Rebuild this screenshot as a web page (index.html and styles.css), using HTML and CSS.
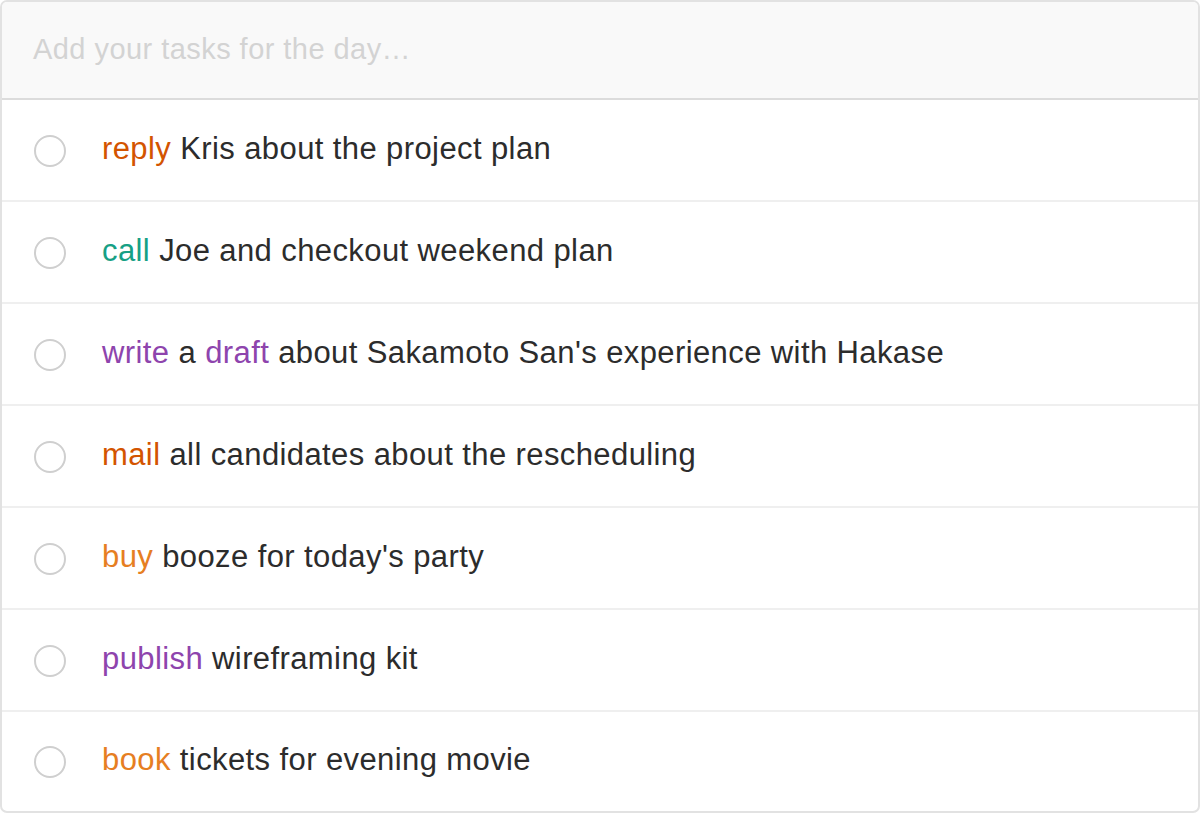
FILE: index.html
```html
<!DOCTYPE html>
<html>
<head>
<meta charset="utf-8">
<link rel="stylesheet" href="styles.css">
</head>
<body>
<div class="todo">
  <div class="entry"><span class="placeholder">Add your tasks for the day…</span></div>
  <ul class="list">
    <li class="item"><span class="check"></span><span class="text"><span class="v orange-red">reply</span> Kris about the project plan</span></li>
    <li class="item"><span class="check"></span><span class="text"><span class="v teal">call</span> Joe and checkout weekend plan</span></li>
    <li class="item"><span class="check"></span><span class="text"><span class="v purple">write</span> a <span class="v purple">draft</span> about Sakamoto San's experience with Hakase</span></li>
    <li class="item"><span class="check"></span><span class="text"><span class="v orange-red">mail</span> all candidates about the rescheduling</span></li>
    <li class="item"><span class="check"></span><span class="text"><span class="v orange">buy</span> booze for today's party</span></li>
    <li class="item"><span class="check"></span><span class="text"><span class="v purple">publish</span> wireframing kit</span></li>
    <li class="item"><span class="check"></span><span class="text"><span class="v orange">book</span> tickets for evening movie</span></li>
  </ul>
</div>
</body>
</html>
```
FILE: styles.css
```css
* { box-sizing: border-box; }
html, body { margin: 0; padding: 0; background: #fff; }
body {
  font-family: "Liberation Sans", Arial, sans-serif;
  color: #333;
  width: 1200px;
  height: 814px;
}
.todo {
  width: 1200px;
  height: 813px;
  border: 2px solid #e2e2e2;
  border-radius: 7px;
  overflow: hidden;
  display: flex;
  flex-direction: column;
}
.entry {
  height: 98px;
  background: #f9f9f9;
  border-bottom: 2px solid #dcdcdc;
  display: flex;
  align-items: center;
  padding-left: 31px;
  padding-bottom: 2px;
}
.placeholder {
  font-size: 29px;
  letter-spacing: 0.45px;
  color: #d3d3d3;
}
.list {
  list-style: none;
  margin: 0;
  padding: 0;
}
.item {
  height: 102px;
  border-bottom: 2px solid #efefef;
  display: flex;
  align-items: center;
  padding-left: 32px;
}
.item:last-child { border-bottom: none; height: 98px; }
.check {
  width: 32px;
  height: 32px;
  border: 2px solid #cfcfcf;
  border-radius: 50%;
  flex: none;
  margin-right: 36px;
  margin-top: 2px;
}
.text {
  font-size: 31px;
  color: #2c2c2c;
  letter-spacing: 0.4px;
  padding-bottom: 3px;
}
.orange-red { color: #d35400; }
.teal { color: #16a085; }
.purple { color: #8e44ad; }
.orange { color: #e67e22; }
```
